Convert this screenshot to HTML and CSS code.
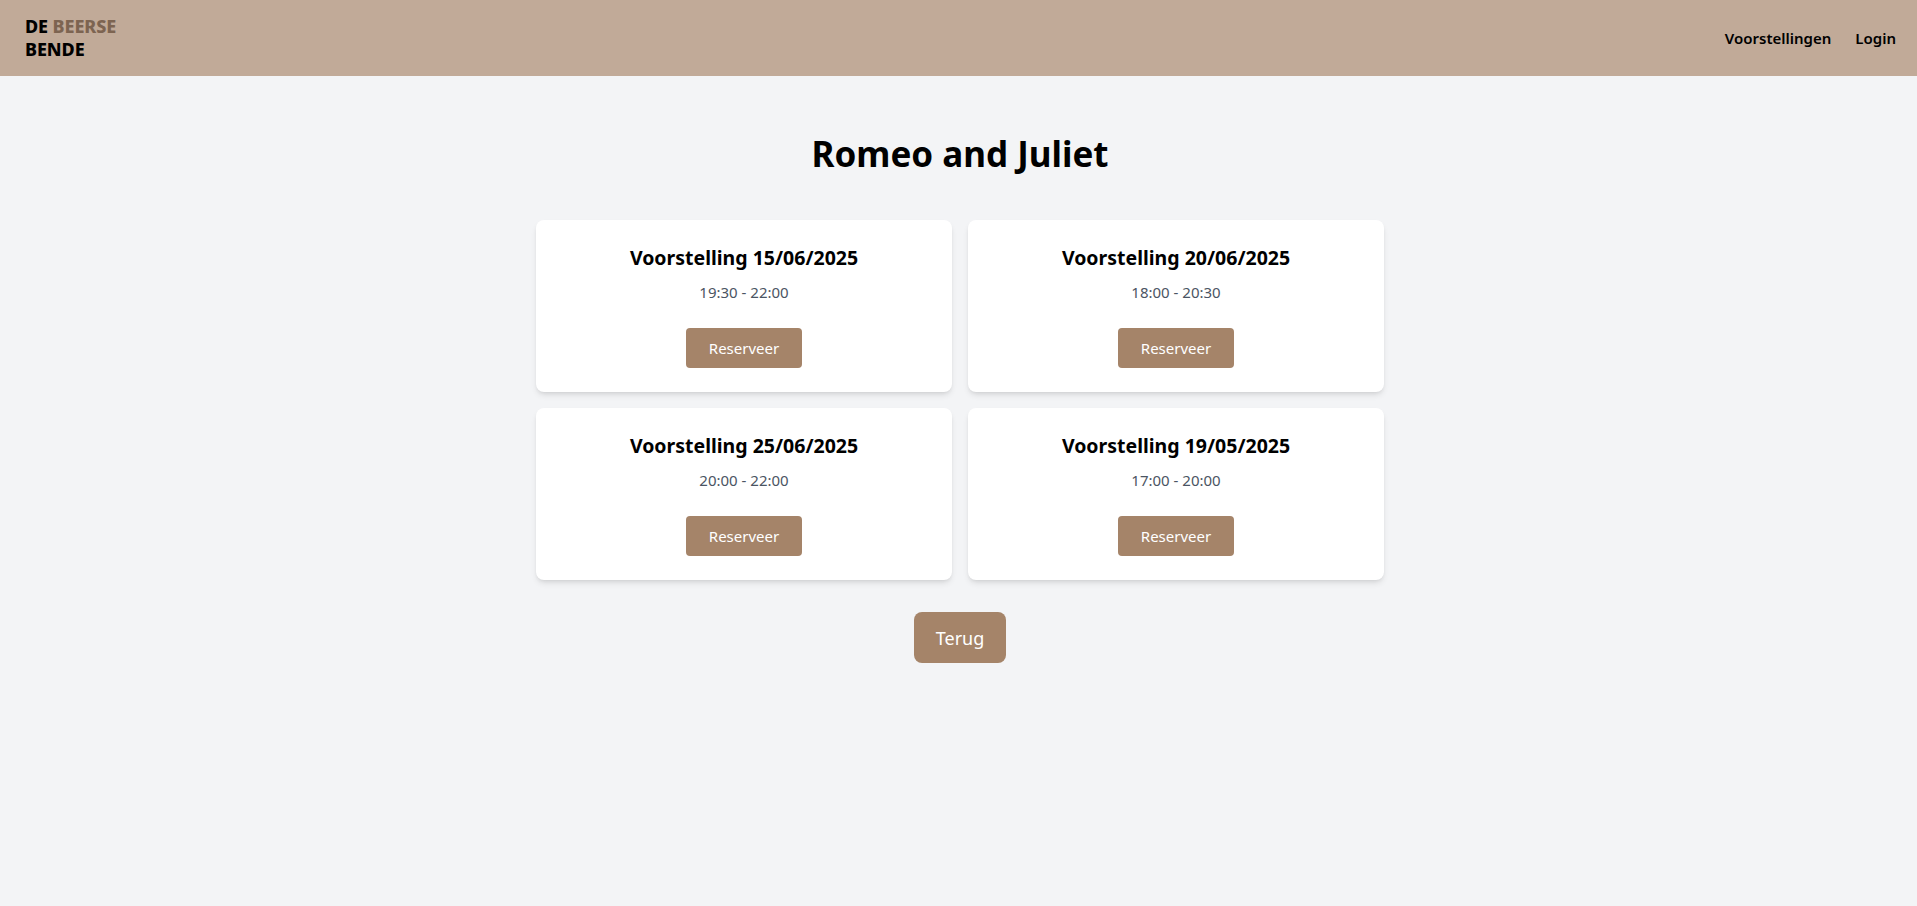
FILE: index.html
```html
<!DOCTYPE html>
<html lang="nl">
<head>
<meta charset="utf-8">
<title>Romeo and Juliet - De Beerse Bende</title>
<link rel="stylesheet" href="styles.css">
</head>
<body>
<header class="topbar">
  <a class="logo" href="#">
    <span class="logo-line">DE <span class="logo-accent">BEERSE</span></span>
    <span class="logo-line">BENDE</span>
  </a>
  <nav class="nav">
    <a class="nav-link" href="#">Voorstellingen</a>
    <a class="nav-link" href="#">Login</a>
  </nav>
</header>
<main class="main">
  <h1 class="title">Romeo and Juliet</h1>
  <div class="grid">
    <div class="card">
      <h2 class="card-title">Voorstelling 15/06/2025</h2>
      <p class="card-time">19:30 - 22:00</p>
      <button class="btn">Reserveer</button>
    </div>
    <div class="card">
      <h2 class="card-title">Voorstelling 20/06/2025</h2>
      <p class="card-time">18:00 - 20:30</p>
      <button class="btn">Reserveer</button>
    </div>
    <div class="card">
      <h2 class="card-title">Voorstelling 25/06/2025</h2>
      <p class="card-time">20:00 - 22:00</p>
      <button class="btn">Reserveer</button>
    </div>
    <div class="card">
      <h2 class="card-title">Voorstelling 19/05/2025</h2>
      <p class="card-time">17:00 - 20:00</p>
      <button class="btn">Reserveer</button>
    </div>
  </div>
  <div class="back-row">
    <button class="btn btn-back">Terug</button>
  </div>
</main>
</body>
</html>
```
FILE: styles.css
```css
* { box-sizing: border-box; }
html, body {
  margin: 0;
  padding: 0;
}
body {
  background: #f3f4f6;
  font-family: "Noto Sans", "Open Sans", sans-serif;
  color: #000;
  min-height: 906px;
}
.topbar {
  height: 76px;
  background: #c1aa98;
  display: flex;
  align-items: center;
  justify-content: space-between;
  padding: 0 21px 0 25px;
}
.logo {
  display: flex;
  flex-direction: column;
  text-decoration: none;
  color: #000;
  font-weight: 800;
  font-size: 18px;
  line-height: 23px;
  letter-spacing: -0.1px;
}
.logo-accent { color: #7d6451; }
.nav {
  display: flex;
  gap: 24px;
}
.nav-link {
  color: #000;
  text-decoration: none;
  font-size: 15px;
  font-weight: 600;
}
.main {
  padding: 54px 0 0 3px;
  display: flex;
  flex-direction: column;
  align-items: center;
}
.title {
  margin: 0 0 42px;
  font-size: 35px;
  line-height: 48px;
  font-weight: 700;
}
.grid {
  width: 848px;
  display: grid;
  grid-template-columns: 1fr 1fr;
  gap: 16px;
}
.card {
  background: #fff;
  border-radius: 8px;
  box-shadow: 0 4px 6px -1px rgba(0,0,0,0.1), 0 2px 4px -2px rgba(0,0,0,0.1);
  padding: 24px;
  display: flex;
  flex-direction: column;
  align-items: center;
  text-align: center;
}
.card-title {
  margin: 0 0 8px;
  font-size: 19.5px;
  line-height: 28px;
  font-weight: 700;
}
.card-time {
  margin: 0 0 24px;
  font-size: 15px;
  line-height: 24px;
  color: #4b5563;
}
.btn {
  font-family: inherit;
  border: none;
  background: #a58469;
  color: #fff;
  font-size: 15px;
  line-height: 24px;
  padding: 8px 0;
  height: 40px;
  width: 116px;
  border-radius: 4px;
  cursor: pointer;
}
.back-row {
  margin-top: 32px;
}
.btn-back {
  width: 92px;
  height: 51px;
  font-size: 18px;
  line-height: 28px;
  padding: 11px 0;
  border-radius: 8px;
}
```
